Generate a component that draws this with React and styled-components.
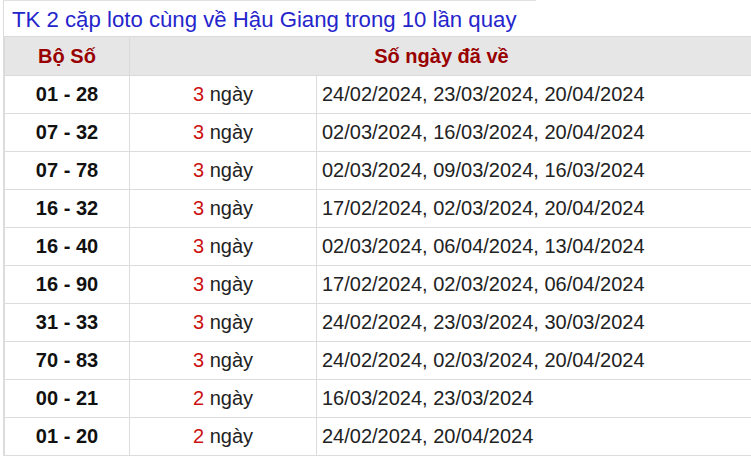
import React from "react";
import styled, { createGlobalStyle } from "styled-components";

const rows = [
  ["01 - 28", 3, "24/02/2024, 23/03/2024, 20/04/2024"],
  ["07 - 32", 3, "02/03/2024, 16/03/2024, 20/04/2024"],
  ["07 - 78", 3, "02/03/2024, 09/03/2024, 16/03/2024"],
  ["16 - 32", 3, "17/02/2024, 02/03/2024, 20/04/2024"],
  ["16 - 40", 3, "02/03/2024, 06/04/2024, 13/04/2024"],
  ["16 - 90", 3, "17/02/2024, 02/03/2024, 06/04/2024"],
  ["31 - 33", 3, "24/02/2024, 23/03/2024, 30/03/2024"],
  ["70 - 83", 3, "24/02/2024, 02/03/2024, 20/04/2024"],
  ["00 - 21", 2, "16/03/2024, 23/03/2024"],
  ["01 - 20", 2, "24/02/2024, 20/04/2024"],
];

export default function App() {
  return (
    <>
      <Global />
      <Wrap>
        <Title>TK 2 cặp loto cùng về Hậu Giang trong 10 lần quay</Title>
        <Table>
          <colgroup>
            <col style={{ width: 125 }} />
            <col style={{ width: 187 }} />
            <col />
          </colgroup>
          <thead>
            <tr>
              <Head>Bộ Số</Head>
              <Head colSpan={2}>Số ngày đã về</Head>
            </tr>
          </thead>
          <tbody>
            {rows.map(([pair, n, dates]) => (
              <tr key={pair}>
                <Cell $bold>{pair}</Cell>
                <Cell>
                  <Count>{n}</Count> ngày
                </Cell>
                <Cell $left>{dates}</Cell>
              </tr>
            ))}
          </tbody>
        </Table>
      </Wrap>
    </>
  );
}

const Global = createGlobalStyle`
  body {
    margin: 0;
    overflow: hidden;
    background: #fff;
    font-family: "Liberation Sans", Arial, sans-serif;
  }
`;

const Wrap = styled.div`
  margin-left: 3px;
  border-left: 1px solid #dcdcdc;
  width: 750px;
`;

const Title = styled.div`
  width: 532px;
  height: 36px;
  box-sizing: border-box;
  border-top: 1px solid #e2e2e2;
  padding: 2px 0 0 8px;
  line-height: 34px;
  font-size: 22.2px;
  color: #2525cc;
`;

const Table = styled.table`
  width: 750px;
  border-collapse: collapse;
  font-size: 20px;
  color: #222;
`;

const Head = styled.th`
  height: 38px;
  padding: 0;
  background: #e6e6e6;
  border: 1px solid #dadada;
  color: #990000;
  font-weight: bold;
  text-align: center;
`;

const Cell = styled.td`
  height: 37px;
  padding: 0 5px;
  border: 1px solid #dcdcdc;
  text-align: ${(p) => (p.$left ? "left" : "center")};
  font-weight: ${(p) => (p.$bold ? "bold" : "normal")};
  color: ${(p) => (p.$bold ? "#111" : "#222")};
`;

const Count = styled.span`
  color: #cc1111;
`;
